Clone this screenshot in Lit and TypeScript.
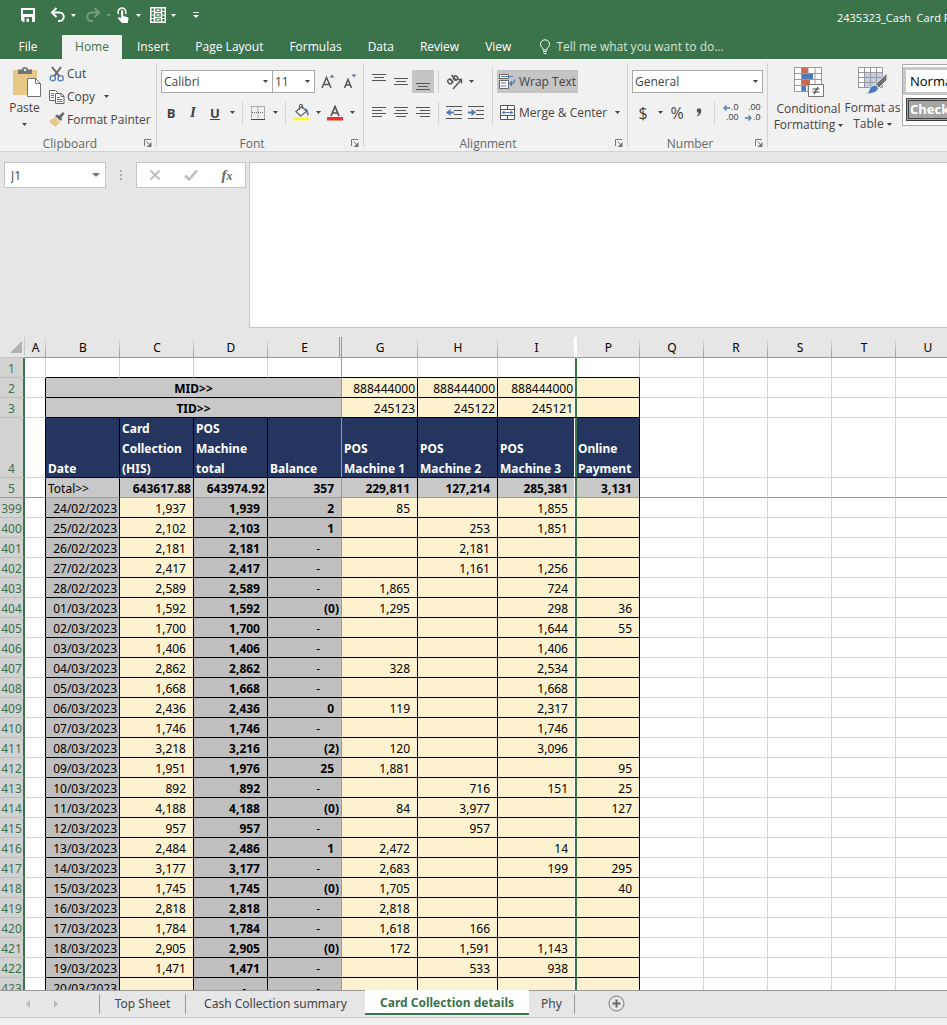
import { LitElement, html, svg, css } from "lit";
import { customElement } from "lit/decorators.js";
import { classMap } from "lit/directives/class-map.js";

type Row = [number, string, string, string, string, string, string, string, string];

const COLUMNS = ["A", "B", "C", "D", "E", "G", "H", "I", "P", "Q", "R", "S", "T", "U"];
const EMPTY_TAIL = ["Q", "R", "S", "T", "U"];

const ROWS: Row[] = [
  [399, "24/02/2023", "1,937", "1,939", "2", "85", "", "1,855", ""],
  [400, "25/02/2023", "2,102", "2,103", "1", "", "253", "1,851", ""],
  [401, "26/02/2023", "2,181", "2,181", "-", "", "2,181", "", ""],
  [402, "27/02/2023", "2,417", "2,417", "-", "", "1,161", "1,256", ""],
  [403, "28/02/2023", "2,589", "2,589", "-", "1,865", "", "724", ""],
  [404, "01/03/2023", "1,592", "1,592", "(0)", "1,295", "", "298", "36"],
  [405, "02/03/2023", "1,700", "1,700", "-", "", "", "1,644", "55"],
  [406, "03/03/2023", "1,406", "1,406", "-", "", "", "1,406", ""],
  [407, "04/03/2023", "2,862", "2,862", "-", "328", "", "2,534", ""],
  [408, "05/03/2023", "1,668", "1,668", "-", "", "", "1,668", ""],
  [409, "06/03/2023", "2,436", "2,436", "0", "119", "", "2,317", ""],
  [410, "07/03/2023", "1,746", "1,746", "-", "", "", "1,746", ""],
  [411, "08/03/2023", "3,218", "3,216", "(2)", "120", "", "3,096", ""],
  [412, "09/03/2023", "1,951", "1,976", "25", "1,881", "", "", "95"],
  [413, "10/03/2023", "892", "892", "-", "", "716", "151", "25"],
  [414, "11/03/2023", "4,188", "4,188", "(0)", "84", "3,977", "", "127"],
  [415, "12/03/2023", "957", "957", "-", "", "957", "", ""],
  [416, "13/03/2023", "2,484", "2,486", "1", "2,472", "", "14", ""],
  [417, "14/03/2023", "3,177", "3,177", "-", "2,683", "", "199", "295"],
  [418, "15/03/2023", "1,745", "1,745", "(0)", "1,705", "", "", "40"],
  [419, "16/03/2023", "2,818", "2,818", "-", "2,818", "", "", ""],
  [420, "17/03/2023", "1,784", "1,784", "-", "1,618", "166", "", ""],
  [421, "18/03/2023", "2,905", "2,905", "(0)", "172", "1,591", "1,143", ""],
  [422, "19/03/2023", "1,471", "1,471", "-", "", "533", "938", ""],
  [423, "20/03/2023", "", "-", "-", "", "", "", ""],
];

const icon = (w: number, h: number, body: unknown) =>
  html`<svg width=${w} height=${h} viewBox="0 0 ${w} ${h}" fill="none" aria-hidden="true">${body}</svg>`;

const caret = icon(5, 3, svg`<path d="M0 0h5L2.500 3z" fill="currentColor"/>`);
const wideCaret = icon(8, 4, svg`<path d="M0 0h8L4 4z" fill="currentColor"/>`);

const lines = (rows: [number, number, number][]) =>
  icon(16, 16, rows.map(([x, y, w]) => svg`<path d="M${x} ${y}.5h${w}" stroke="#555"/>`));

const icons = {
  save: icon(16, 16, svg`<path d="M1 1h14v14H3l-2-2z" fill="#fff"/><path d="M3 3h10v4H3z" fill="#3b734b"/><path d="M4.500 10h7.500v5H4.500z" fill="#3b734b"/><path d="M6.500 11.500h2.500V15H6.500z" fill="#fff"/>`),
  undo: icon(16, 16, svg`<path d="M2 5.500h7.500a4 4 0 0 1 0 8.500H8" stroke="currentColor" stroke-width="2"/><path d="M6.500 1L2 5.500 6.500 10" stroke="currentColor" stroke-width="2"/>`),
  redo: icon(16, 16, svg`<path d="M14 5.500H6.500a4 4 0 0 0 0 8.500H8" stroke="currentColor" stroke-width="2"/><path d="M9.500 1L14 5.500 9.500 10" stroke="currentColor" stroke-width="2"/>`),
  touch: icon(16, 18, svg`<path d="M3.500 8A4 4 0 1 1 10.500 8" stroke="#fff" stroke-width="1.500"/><path d="M6 5a1 1 0 0 1 2.200 0v5l4.500 1.200q1 .3.800 1.500L12.700 17H7L3 12.500q-.5-1.500 1-1.300l2 1z" fill="#fff"/>`),
  film: icon(16, 16, svg`<path d="M.75.75h14.500v14.500H.75zM4.500 1v14M11.500 1v14M4.500 5.500h7M4.500 10.500h7" stroke="#fff" stroke-width="1.500"/><path d="M1 4.500h3M1 8h3M1 11.500h3M12 4.500h3M12 8h3M12 11.500h3" stroke="#fff"/><path d="M6.500 3.200h3M6.500 8h3M6.500 12.800h3" stroke="#fff" stroke-width="1.500"/>`),
  customize: icon(6, 6, svg`<path d="M0 .5h6" stroke="#fff"/><path d="M0 3h6L3 6z" fill="#fff"/>`),
  bulb: icon(12, 16, svg`<path d="M4 11V9.500Q1.500 8 1.500 5.300a4.500 4.500 0 0 1 9 0Q10.500 8 8 9.500V11z" stroke="#fff"/><path d="M4 12.500h4M4.500 14.500h3" stroke="#fff"/>`),
  paste: icon(28, 30, svg`<path d="M0 3h24v25H0z" fill="#e8c887"/><path d="M5 7V2.500h4Q9 0 12 0t3 2.500h4V7z" fill="#737373"/><circle cx="12" cy="3" r="1.200" fill="#f1f1f1"/><path d="M14.500 11.500h8l5 5v13h-13z" fill="#fff" stroke="#737373"/><path d="M22.500 11.500v5h5" stroke="#737373"/>`),
  cut: icon(16, 16, svg`<path d="M3 1l7.500 9.500M12 1L5 10.500" stroke="#666" stroke-width="2"/><circle cx="3.800" cy="12.200" r="2.600" stroke="#4f7ab5" stroke-width="1.300"/><circle cx="11.600" cy="12.200" r="2.600" stroke="#4f7ab5" stroke-width="1.300"/>`),
  copy: icon(16, 16, svg`<path d="M.5 1.500h6l2 2v8h-8z" fill="#fff" stroke="#666"/><path d="M2 4.500h3M2 6.500h3M2 8.500h3" stroke="#4f7ab5"/><path d="M6.500 4.500h6l2.500 2.500v7.500H6.500z" fill="#fff" stroke="#666"/><path d="M12 4.500v3h3" stroke="#666"/><path d="M8 8.500h3M8 10.500h5.500M8 12.500h5.500" stroke="#4f7ab5"/>`),
  painter: icon(16, 16, svg`<path d="M0 9l6-4 5 5.500L6 15q-1-2-2.500-2.500T0 9z" fill="#e8c887"/><path d="M6 4l2-1.500 2 1.200L14 0l1.500 1.800-3 3.500.5 2L11.500 9z" fill="#666"/>`),
  grow: icon(14, 16, svg`<path d="M1 14L5.500 3.500 10 14M2.600 10.500h5.800" stroke="#555" stroke-width="1.500"/><path d="M8.500 3.500h5L11 .5z" fill="#4f7ab5"/>`),
  shrink: icon(14, 16, svg`<path d="M1.500 14L5 5.500 8.500 14M2.800 11h4.400" stroke="#555" stroke-width="1.500"/><path d="M8.500.5h5L11 3.500z" fill="#4f7ab5"/>`),
  borders: icon(14, 14, svg`<path d="M.5.5h13v12M.5.5v12M7 1v12M1 6.500h12" stroke="#666" stroke-dasharray="1 1"/><path d="M0 13.500h14" stroke="#444"/>`),
  bucket: icon(17, 17, svg`<path d="M3 7.500l6-5 4.500 5-6 4.500z" fill="#fff" stroke="#666" stroke-width="1.300"/><path d="M6.500 6V2a1.500 1.500 0 0 1 3 0v3" stroke="#666" stroke-width="1.200"/><path d="M12 4q4 1 3.500 8-2-1-2-4z" fill="#4f7ab5"/><path d="M0 13h16v3.500H0z" fill="#ffff38"/>`),
  fontColor: icon(16, 16, svg`<path d="M4 11L8 1.500 12 11M5.500 8h5" stroke="#555" stroke-width="1.700"/><path d="M0 12h16v3.500H0z" fill="#e8352c"/>`),
  top: lines([[1, 0, 14], [3, 3, 10], [1, 6, 14]]),
  middle: lines([[1, 4, 14], [3, 7, 10], [1, 10, 14]]),
  bottom: lines([[1, 9, 14], [3, 12, 10], [1, 15, 14]]),
  left: lines([[1, 2, 14], [1, 5, 10], [1, 8, 14], [1, 11, 10]]),
  center: lines([[1, 2, 14], [3, 5, 10], [1, 8, 14], [3, 11, 10]]),
  right: lines([[1, 2, 14], [5, 5, 10], [1, 8, 14], [5, 11, 10]]),
  orient: icon(17, 16, svg`<g stroke="#555" stroke-width="1.400"><ellipse cx="4" cy="7.500" rx="2" ry="2.400" transform="rotate(-45 4 7.500)"/><path d="M3.500 4.500l4 4"/><path d="M5.500 1l5 5.500"/><ellipse cx="9.500" cy="4" rx="2" ry="2.200" transform="rotate(-45 9.500 4)"/><path d="M7 15L15.500 5.500M11.500 5.500h4v4"/></g>`),
  outdent: icon(16, 14, svg`<path d="M0 .5h16M8 4.500h8M8 8.500h8M0 12.500h16" stroke="#555"/><path d="M2 6.500h6" stroke="#4f7ab5" stroke-width="2"/><path d="M4.500 3v7L0 6.500z" fill="#4f7ab5"/>`),
  indent: icon(16, 14, svg`<path d="M0 .5h16M8 4.500h8M8 8.500h8M0 12.500h16" stroke="#555"/><path d="M0 6.500h5" stroke="#4f7ab5" stroke-width="2"/><path d="M3.500 3v7L8 6.500z" fill="#4f7ab5"/>`),
  wrap: icon(17, 16, svg`<path d="M.5.500h9v4h-9zM.5 6.500h9v8h-9z" fill="#fff" stroke="#666"/><path d="M2 2.500h12M2 9h5M2 12h5" stroke="#4f7ab5" stroke-width="1.200"/><path d="M15.500 5.500q.5 4-4 4" stroke="#4f7ab5" stroke-width="1.500"/><path d="M13 6.500v6L10 9.500z" fill="#4f7ab5"/>`),
  merge: icon(16, 16, svg`<path d="M.5.500h14v14H.5zM.5 4.500h14M.5 10.500h14M7.500.5v4M7.500 10.500v4" fill="#fff" stroke="#555"/><path d="M3 7.500h9" stroke="#4f7ab5"/><path d="M4.500 5.500v4l-3-2zM10.500 5.500v4l3-2z" fill="#4f7ab5"/>`),
  launcher: icon(8, 8, svg`<path d="M.5 7V.5H7" stroke="#777"/><path d="M2.500 2.500l4 4" stroke="#777"/><path d="M7.500 3v5h-5z" fill="#777"/>`),
  arrowLeft: icon(7, 6, svg`<path d="M1 3h6" stroke="#4f7ab5" stroke-width="1.500"/><path d="M3.500.5L1 3l2.500 2.500" stroke="#4f7ab5" stroke-width="1.200"/>`),
  arrowRight: icon(7, 6, svg`<path d="M0 3h6" stroke="#4f7ab5" stroke-width="1.500"/><path d="M3.500.5L6 3 3.500 5.500" stroke="#4f7ab5" stroke-width="1.200"/>`),
  comma: icon(6, 9, svg`<circle cx="3" cy="2.600" r="2.300" fill="#555"/><path d="M5.300 2.600Q5.300 6.500 1.500 8.500L1 7.500Q3 6.200 3 4z" fill="#555"/>`),
  conditional: icon(30, 31, svg`<path d="M.5.5h27v24H.5z" fill="#fff"/><path d="M8 1h6v5H8z" fill="#c8694c"/><path d="M8 19h4v5H8z" fill="#4f7ab5"/><path d="M.5.5h27v24H.5zM7.500.5v24M14 .5v24M21 .5v24M.5 6.500h27M.5 12.500h27M.5 18.500h27" stroke="#999"/><path d="M8 7h11v5H8z" fill="#4f7ab5"/><path d="M8 13h8v5H8z" fill="#c8694c"/><path d="M14.500 17.500h15v12h-15z" fill="#fff" stroke="#777"/><path d="M18.500 22h7M18.500 25h7M24 20l-4 7" stroke="#444" stroke-width="1.200"/>`),
  table: icon(30, 30, svg`<path d="M.5.5h24v20H.5z" fill="#fff"/><path d="M7 6h18v15H7z" fill="#c3cfe6"/><path d="M.5.5h24v20H.5zM6.500.5v20M12.500.5v20M18.500.5v20M.5 5.500h24M.5 10.500h24M.5 15.500h24" stroke="#999"/><path d="M29 6v7l-8 8-4-3.500z" fill="#737373" stroke="#f1f1f1"/><path d="M16.500 18q3.500 0 4 3.500Q19 27 7 27q4-1.500 4.500-5t5-4z" fill="#4f7ab5" stroke="#f1f1f1"/>`),
  cancel: icon(12, 12, svg`<path d="M1.500 1.500l9 9M10.500 1.500l-9 9" stroke="#bdbdbd" stroke-width="1.800"/>`),
  check: icon(14, 12, svg`<path d="M1 6.500L5 10.500 13 1.500" stroke="#bdbdbd" stroke-width="2.500"/>`),
  dots: icon(2, 11, svg`<path d="M0 0h2v2H0zM0 4h2v2H0zM0 8h2v2H0z" fill="#aaa"/>`),
  corner: icon(12, 12, svg`<path d="M12 0v12H0z" fill="#b1b1b1"/>`),
  prev: icon(4, 8, svg`<path d="M4 0v8L0 4z" fill="#b9b9b9"/>`),
  next: icon(4, 8, svg`<path d="M0 0v8l4-4z" fill="#b9b9b9"/>`),
  add: icon(17, 17, svg`<circle cx="8.500" cy="8.500" r="7.500" stroke="#777"/><path d="M8.500 4.500v8M4.500 8.500h8" stroke="#666" stroke-width="2"/>`),
};

@customElement("quick-access")
export class QuickAccess extends LitElement {
  static styles = css`
    :host { display: flex; align-items: center; height: 35px; color: #fff; overflow: hidden; }
    .tools { display: flex; align-items: center; flex: none; padding: 0 0 5px 17px; }
    button { display: grid; place-items: center; width: 22px; height: 22px; padding: 0; border: 0; background: none; color: inherit; }
    .drop { width: 8px; }
    .gap { margin-left: 8px; }
    .near { margin-left: 5px; }
    .faded { opacity: .3; }
    .title { flex: none; margin-left: auto; white-space: pre; font-size: 11px; width: 110px; }
  `;
  render() {
    return html`
      <div class="tools">
        <button aria-label="Save">${icons.save}</button>
        <button class="gap" aria-label="Undo">${icons.undo}</button>
        <button class="drop" aria-label="Undo list">${caret}</button>
        <button class="near faded" aria-label="Redo">${icons.redo}</button>
        <button class="drop faded" aria-label="Redo list">${caret}</button>
        <button aria-label="Touch mode">${icons.touch}</button>
        <button class="drop" aria-label="Touch options">${caret}</button>
        <button class="near" aria-label="Data form">${icons.film}</button>
        <button class="drop" aria-label="Form options">${caret}</button>
        <button class="gap" aria-label="Customize toolbar">${icons.customize}</button>
      </div>
      <span class="title">2435323_Cash  Card F</span>`;
  }
}

@customElement("ribbon-tabs")
export class RibbonTabs extends LitElement {
  static styles = css`
    :host { display: flex; height: 24px; color: #fff; font-size: 12px; }
    button { font: inherit; color: inherit; border: 0; background: none; padding: 0; white-space: nowrap; line-height: 24px; }
    .file { width: 56px; margin-right: 6px; }
    .home { width: 60px; background: #f1f1f1; color: #3b734b; }
    nav { display: flex; gap: 26px; padding-left: 15px; }
    .tell { display: flex; align-items: center; gap: 5px; margin-left: 28px; color: #d4e5d9; }
  `;
  render() {
    return html`
      <button class="file">File</button>
      <button class="home">Home</button>
      <nav>
        ${["Insert", "Page Layout", "Formulas", "Data", "Review", "View"].map((t) => html`<button>${t}</button>`)}
      </nav>
      <button class="tell">${icons.bulb}<span>Tell me what you want to do...</span></button>`;
  }
}

@customElement("ribbon-panel")
export class RibbonPanel extends LitElement {
  static styles = css`
    :host { display: flex; height: 92px; background: #f1f1f1; border-bottom: 1px solid #d2d2d2; color: #444; font-size: 12px; overflow: hidden; }
    button { display: grid; place-items: center; font: inherit; color: inherit; border: 0; background: none; padding: 0; width: 22px; height: 23px; white-space: nowrap; }
    .group { display: flex; flex-direction: column; flex: none; box-sizing: border-box; margin: 4px 0; border-right: 1px solid #d2d2d2; padding: 3px 2px 0 3px; }
    .clipboard { width: 157px; }
    .font { width: 207px; }
    .alignment { width: 264px; padding-left: 4px; }
    .number { width: 140px; padding-left: 4px; }
    .styles { flex: 1 0 auto; border: 0; padding-left: 4px; }
    .body { display: flex; flex: 1; min-height: 0; }
    .stack { display: flex; flex-direction: column; gap: 8px; padding-top: 4px; }
    .row { display: flex; align-items: center; height: 23px; }
    .foot { display: flex; align-items: center; flex: none; height: 16px; margin-bottom: -4px; color: #666; }
    .foot span { flex: 1; text-align: center; padding-right: 5px; }
    .foot button { width: 12px; height: 16px; }
    .drop { width: 12px; }
    .rule { width: 1px; height: 22px; margin: 0 4px; background: #d2d2d2; }
    .tall { height: 56px; margin: 2px 4px 0 5px; }
    .big { display: flex; flex-direction: column; align-items: center; height: auto; line-height: 16px; padding-top: 1px; }
    .big svg { flex: none; }
    .big .label { margin-top: 3px; }
    .big .label svg { vertical-align: middle; }
    .paste { width: 43px; justify-content: flex-start; gap: 0; }
    .paste .icon { padding-left: 5px; height: 30px; }
    .paste .arrow { line-height: 12px; }
    .clips { display: flex; flex-direction: column; margin-top: -4px; }
    .text { display: flex; justify-content: flex-start; gap: 4px; width: auto; padding: 0 3px; }
    .clips .text { gap: 2px; }
    .clips .text svg:last-child:not(:first-child) { margin-left: 7px; }
    .on { background: #c5c5c5; }
    .wrap { width: 81px; box-sizing: border-box; padding: 0 2px; gap: 3px; }
    .merge { gap: 3px; }
    .merge svg:last-child { margin-left: 5px; }
    .bold { font-weight: 700; font-size: 13px; }
    .italic { font-family: "Liberation Serif", serif; font-style: italic; font-weight: 700; font-size: 15px; }
    .under { font-weight: 700; font-size: 13px; text-decoration: underline; }
    .symbol { font-size: 16px; }
    .digits { font-family: "Liberation Sans", sans-serif; font-size: 9px; line-height: 11px; }
    .digits div { display: flex; align-items: center; justify-content: flex-end; gap: 1px; width: 17px; height: 10px; }
    .pick { display: grid; align-items: center; }
    .pick select, .pick svg { grid-area: 1 / 1; }
    .pick svg { justify-self: end; margin-right: 5px; pointer-events: none; }
    select { appearance: none; font: inherit; color: #444; background: #fff; border: 1px solid #ababab; border-radius: 0; height: 23px; padding: 0 2px; width: 100%; margin: 0; }
    .face { width: 112px; margin-left: 1px; }
    .size { width: 43px; margin: 0 2px 0 -1px; }
    .format { width: 131px; }
    .cond { width: 73px; }
    .table { width: 55px; }
    .gallery { margin: -2px -4px 6px 2px; background: #fff; border: 1px solid #ababab; border-right: 0; height: 62px; flex: 1 0 60px; box-sizing: border-box; padding-top: 2px; overflow: hidden; }
    .gallery button { display: block; width: 100%; text-align: left; font-size: 13px; box-sizing: border-box; color: #000; }
    .gallery .normal { height: 28px; border: 3px solid #c8c8c8; border-right: 0; padding-left: 4px; background: #fff; }
    .gallery .checked { height: 23px; margin: 3px 0 0 3px; background: #a5a5a5; border: 3px double #3f3f3f; border-right: 0; color: #fff; font-weight: 700; padding-left: 1px; line-height: 15px; }
  `;
  private btn(name: keyof typeof icons, label: string, on = false) {
    return html`<button class=${classMap({ on })} aria-label=${label}>${icons[name]}</button>`;
  }
  private drop(label: string) {
    return html`<button class="drop" aria-label=${label}>${caret}</button>`;
  }
  private foot(label: string) {
    return html`<div class="foot"><span>${label}</span><button aria-label="${label} settings">${icons.launcher}</button></div>`;
  }
  render() {
    const rule = html`<i class="rule"></i>`;
    return html`
      <section class="group clipboard">
        <div class="body">
          <button class="big paste"><span class="icon">${icons.paste}</span><span class="label">Paste</span><span class="arrow">${caret}</span></button>
          <div class="clips">
            <button class="text">${icons.cut}Cut</button>
            <button class="text">${icons.copy}Copy ${caret}</button>
            <button class="text">${icons.painter}Format Painter</button>
          </div>
        </div>
        ${this.foot("Clipboard")}
      </section>
      <section class="group font">
        <div class="body stack">
          <div class="row">
            <label class="pick face"><select aria-label="Font"><option>Calibri</option></select>${caret}</label>
            <label class="pick size"><select aria-label="Font size"><option>11</option></select>${caret}</label>
            ${this.btn("grow", "Increase font size")}${this.btn("shrink", "Decrease font size")}
          </div>
          <div class="row">
            <button class="bold">B</button><button class="italic">I</button><button class="under">U</button>${this.drop("Underline styles")}
            ${rule}${this.btn("borders", "Borders")}${this.drop("Border styles")}
            ${rule}${this.btn("bucket", "Fill color")}${this.drop("Fill colors")}${this.btn("fontColor", "Font color")}${this.drop("Font colors")}
          </div>
        </div>
        ${this.foot("Font")}
      </section>
      <section class="group alignment">
        <div class="body">
          <div class="stack">
            <div class="row">
              ${this.btn("top", "Top align")}${this.btn("middle", "Middle align")}${this.btn("bottom", "Bottom align", true)}
              ${rule}${this.btn("orient", "Orientation")}${this.drop("Orientation options")}
            </div>
            <div class="row">
              ${this.btn("left", "Align left")}${this.btn("center", "Center")}${this.btn("right", "Align right")}
              ${rule}${this.btn("outdent", "Decrease indent")}${this.btn("indent", "Increase indent")}
            </div>
          </div>
          <i class="rule tall"></i>
          <div class="stack">
            <button class="text wrap on">${icons.wrap}Wrap Text</button>
            <button class="text merge">${icons.merge}Merge &amp; Center ${caret}</button>
          </div>
        </div>
        ${this.foot("Alignment")}
      </section>
      <section class="group number">
        <div class="body stack">
          <div class="row">
            <label class="pick format"><select aria-label="Number format"><option>General</option></select>${caret}</label>
          </div>
          <div class="row">
            <button class="symbol">$</button>${this.drop("Currencies")}<button class="symbol">%</button>${this.btn("comma", "Comma style")}
            ${rule}
            <button class="digits" aria-label="Increase decimal"><span><div>${icons.arrowLeft}.0</div><div>.00</div></span></button>
            <button class="digits" aria-label="Decrease decimal"><span><div>.00</div><div>${icons.arrowRight}.0</div></span></button>
          </div>
        </div>
        ${this.foot("Number")}
      </section>
      <section class="group styles">
        <div class="body">
          <button class="big cond">${icons.conditional}<span class="label">Conditional<br />Formatting ${caret}</span></button>
          <button class="big table">${icons.table}<span class="label">Format as<br />Table ${caret}</span></button>
          <div class="gallery">
            <button class="normal">Normal</button>
            <button class="checked">Check Cell</button>
          </div>
        </div>
      </section>`;
  }
}

@customElement("formula-bar")
export class FormulaBar extends LitElement {
  static styles = css`
    :host { display: flex; align-items: flex-start; padding: 10px 0 9px 4px; background: #e6e6e6; color: #444; font-size: 12px; }
    .name { display: grid; align-items: center; width: 102px; color: #777; }
    .name input, .name svg { grid-area: 1 / 1; }
    .name svg { justify-self: end; margin-right: 6px; }
    input { box-sizing: border-box; width: 100%; height: 26px; border: 1px solid #c6c6c6; background: #fff; padding: 0 6px; font: inherit; color: #444; }
    .dots { display: grid; place-items: center; width: 30px; height: 26px; }
    .tools { display: flex; box-sizing: border-box; width: 110px; height: 26px; border: 1px solid #c6c6c6; background: #fff; }
    button { flex: 1; display: grid; place-items: center; border: 0; padding: 0; background: none; color: #666; }
    .fx { font: italic 700 15px/20px "Liberation Serif", serif; }
    .fx small { font-size: 12px; }
    textarea { flex: 1; box-sizing: border-box; height: 166px; margin: 0 0 0 3px; border: 1px solid #c6c6c6; border-right: 0; background: #fff; resize: none; border-radius: 0; font: inherit; }
  `;
  render() {
    return html`
      <label class="name"><input aria-label="Name box" .value=${"J1"} />${wideCaret}</label>
      <span class="dots">${icons.dots}</span>
      <div class="tools">
        <button aria-label="Cancel">${icons.cancel}</button>
        <button aria-label="Enter">${icons.check}</button>
        <button class="fx" aria-label="Insert function"><span>f<small>x</small></span></button>
      </div>
      <textarea aria-label="Formula"></textarea>`;
  }
}

@customElement("sheet-grid")
export class SheetGrid extends LitElement {
  static styles = css`
    :host { display: block; flex: 1; min-height: 0; overflow: hidden; background: #fff; color: #000; font-family: "Noto Sans", sans-serif; font-size: 12px; }
    table { table-layout: fixed; width: 960px; border-collapse: separate; border-spacing: 0; line-height: 17px; }
    .w-head { width: 25px; } .w-A { width: 21px; }
    .w-B, .w-C, .w-D, .w-E { width: 74px; }
    .w-G { width: 76px; } .w-H { width: 80px; } .w-I { width: 79px; } .w-P { width: 63px; }
    .w-Q, .w-R, .w-S, .w-T, .w-U { width: 64px; }
    th, td { height: 20px; box-sizing: border-box; padding: 0 7px 0 2px; text-align: right; vertical-align: bottom; white-space: nowrap; font-weight: 400; border: 0 solid #d4d4d4; border-width: 0 1px 1px 0; }
    thead th { height: 21px; padding: 0; background: linear-gradient(#e6e6e6, #999) right / 1px 100% no-repeat #e6e6e6; text-align: center; vertical-align: middle; border-bottom-color: #999; border-right: 0; }
    thead .corner { background-image: none; border-right: 1px solid #c6c6c6; border-bottom-color: #c6c6c6; }
    .corner svg { display: block; margin: 2px 2px 2px auto; }
    thead .E { border-right: 1px solid #999; box-shadow: inset -1px 0 #e6e6e6, inset -2px 0 #999; background-image: none; }
    thead .I { border-right: 2px solid #fff; }
    tbody th { background: #d2d2d2; color: #3b734b; text-align: center; padding: 0; border-right: 2px solid #3b734b; border-bottom-color: #bdbdbd; }
    .A { padding: 0; }
    .dark { border-color: #000; }
    .edge { border-right-color: #000; }
    .E { border-right-color: #999; }
    .I { border-right: 2px solid #3b734b; box-shadow: inset -1px 0 #fff; }
    .gray { background: #c8c8c8; }
    .deep { background: #bfbfbf; }
    .cream { background: #fdf2d0; }
    .navy { background: #24365f; color: #fff; text-align: left; font-weight: 700; line-height: 20px; white-space: pre-line; padding-right: 0; }
    .navy span { display: block; margin: -2px 0 -2px; }
    .P.navy { padding-left: 1px; }
    .head { height: 60px; }
    .bold { font-weight: 700; }
    .mid { text-align: center; }
    .tight, .mid { padding-right: 2px; }
    .start { text-align: left; }
    .dash { padding-right: 21px; font-weight: 400; }
    .under { border-bottom-color: #000; }
    .frozen th, .frozen td { border-bottom-color: #999; }
    .merged { border-right-color: #999; }
  `;
  private tail() {
    return EMPTY_TAIL.map(() => html`<td></td>`);
  }
  private shape(v: string) {
    return { bold: v !== "-", dash: v === "-", tight: v.startsWith("(") };
  }
  private dataRow([n, date, c, d, e, g, h, i, p]: Row) {
    return html`<tr>
      <th scope="row">${n}</th><td class="A edge"></td>
      <td class="dark deep tight">${date}</td>
      <td class="dark cream">${c}</td>
      <td class=${classMap({ dark: true, deep: true, ...this.shape(d) })}>${d}</td>
      <td class=${classMap({ dark: true, deep: true, E: true, ...this.shape(e) })}>${e}</td>
      <td class="dark cream">${g}</td><td class="dark cream">${h}</td>
      <td class="dark cream I">${i}</td><td class="dark cream">${p}</td>${this.tail()}
    </tr>`;
  }
  private idRow(n: number, label: string, ids: string[]) {
    return html`<tr>
      <th scope="row">${n}</th><td class="A edge"></td>
      <td colspan="4" class="dark gray bold mid merged">${label}</td>
      ${ids.map((v, k) => html`<td class=${classMap({ dark: true, cream: true, tight: true, I: k === 2 })}>${v}</td>`)}
      <td class="dark cream"></td>${this.tail()}
    </tr>`;
  }
  render() {
    const heads = ["Date", "Card\nCollection\n(HIS)", "POS\nMachine\ntotal", "Balance", "POS\nMachine 1", "POS\nMachine 2", "POS\nMachine 3", "Online\nPayment"];
    const keys = ["B", "C", "D", "E", "G", "H", "I", "P"];
    return html`<table aria-label="Card Collection details">
      <colgroup><col class="w-head" />${COLUMNS.map((c) => html`<col class="w-${c}" />`)}</colgroup>
      <thead><tr><th class="corner">${icons.corner}</th>${COLUMNS.map((c) => html`<th scope="col" class=${c}>${c}</th>`)}</tr></thead>
      <tbody>
        <tr><th scope="row">1</th><td class="A"></td>${keys.map((k) => html`<td class="under ${k}"></td>`)}${this.tail()}</tr>
        ${this.idRow(2, "MID>>", ["888444000", "888444000", "888444000"])}
        ${this.idRow(3, "TID>>", ["245123", "245122", "245121"])}
        <tr>
          <th scope="row" class="head">4</th><td class="A edge"></td>
          ${heads.map((h, k) => html`<td class="dark navy ${keys[k]}"><span>${h}</span></td>`)}${this.tail()}
        </tr>
        <tr class="frozen">
          <th scope="row">5</th><td class="A edge"></td>
          <td class="dark gray start">Total&gt;&gt;</td>
          <td class="dark gray bold tight">643617.88</td><td class="dark gray bold tight">643974.92</td>
          <td class="dark gray bold E">357</td><td class="dark gray bold">229,811</td><td class="dark gray bold">127,214</td>
          <td class="dark gray bold I">285,381</td><td class="dark gray bold">3,131</td>${this.tail()}
        </tr>
        ${ROWS.map((r) => this.dataRow(r))}
      </tbody>
    </table>`;
  }
}

@customElement("sheet-tabs")
export class SheetTabs extends LitElement {
  static styles = css`
    :host { display: block; flex: none; background: #f1f1f1; padding-bottom: 7px; }
    .bar { display: flex; align-items: flex-start; height: 26px; background: #e6e6e6; border-top: 1px solid #999; border-bottom: 1px solid #c6c6c6; color: #444; font-family: "Noto Sans", sans-serif; font-size: 12px; }
    button { font: inherit; color: inherit; background: none; border: 0; padding: 0; height: 25px; white-space: nowrap; }
    .arrow { display: grid; place-items: center; width: 28px; }
    .arrows { display: flex; padding-left: 14px; width: 85px; }
    .tab { box-sizing: border-box; border-left: 1px solid #999; margin-top: 3px; height: 20px; line-height: 18px; }
    .top { width: 86px; }
    .cash { width: 180px; }
    .active { width: 164px; background: #fff; color: #3b734b; font-weight: 700; border-bottom: 2px solid #3b734b; margin-top: -1px; padding-top: 3px; box-sizing: border-box; line-height: 20px; }
    .phy { width: 46px; border-left: 0; border-right: 1px solid #999; }
    .add { display: grid; place-items: center; width: 28px; margin-left: 27px; }
  `;
  render() {
    return html`<div class="bar">
      <span class="arrows"><button class="arrow" aria-label="Previous sheet">${icons.prev}</button><button class="arrow" aria-label="Next sheet">${icons.next}</button></span>
      <button class="tab top">Top Sheet</button>
      <button class="tab cash">Cash Collection summary</button>
      <button class="active">Card Collection details</button>
      <button class="tab phy">Phy</button>
      <button class="add" aria-label="New sheet">${icons.add}</button>
    </div>`;
  }
}

@customElement("app-root")
export class AppRoot extends LitElement {
  static styles = css`
    :host { display: flex; flex-direction: column; height: 100vh; overflow: hidden; background: #e6e6e6; font-family: "Open Sans", "Noto Sans", sans-serif; }
    header { background: #3b734b; flex: none; }
    ribbon-panel, formula-bar { flex: none; }
  `;
  render() {
    return html`
      <header><quick-access></quick-access><ribbon-tabs></ribbon-tabs></header>
      <ribbon-panel></ribbon-panel>
      <formula-bar></formula-bar>
      <sheet-grid></sheet-grid>
      <sheet-tabs></sheet-tabs>`;
  }
}
